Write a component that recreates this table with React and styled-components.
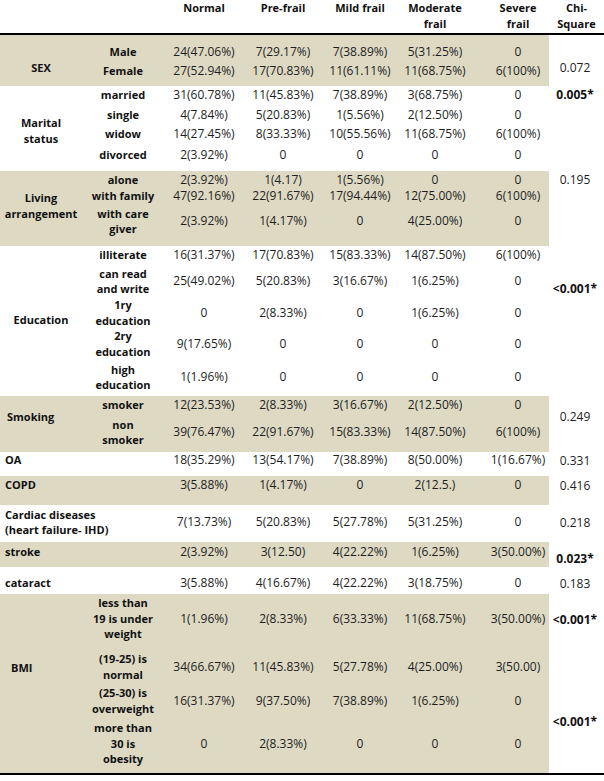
import React from 'react'
import styled, { createGlobalStyle } from 'styled-components'

const GlobalStyle = createGlobalStyle`
  html, body {
    margin: 0;
    padding: 0;
    background: #fff;
  }
  body {
    font-family: "Open Sans", "Liberation Sans", sans-serif;
    color: #1e1e1e;
  }
`

const BEIGE = '#ddd9c3'

const Table = styled.table`
  width: 604px;
  table-layout: fixed;
  border-collapse: separate;
  border-spacing: 0;
  border-bottom: 2px solid #000;
`

// header cells: bold, top aligned, black rule underneath
const HeadCell = styled.th`
  height: 33px;
  padding: 0 0 0 ${p => p.$pl || 0}px;
  vertical-align: top;
  text-align: center;
  font-size: 11px;
  font-weight: 700;
  line-height: 16px;
  color: #111;
  border-bottom: 2px solid #000;
`

const Row = styled.tr`
  height: ${p => p.$h}px;
`

/* the big label on the left, spanning every sub row of its group */
const GroupCell = styled.td`
  padding: ${p => p.$pt || 0}px 0 0 ${p => p.$pl || 0}px;
  vertical-align: top;
  text-align: ${p => p.$align || 'center'};
  font-size: 11px;
  font-weight: 700;
  line-height: 15.5px;
  color: #111;
  background: ${p => (p.$shade ? BEIGE : '#fff')};
`

const LabelCell = styled.td`
  padding: ${p => p.$pt || 0}px 0 ${p => p.$pb || 0}px ${p => p.$pl || 0}px;
  vertical-align: middle;
  text-align: ${p => p.$align || 'center'};
  font-size: 11px;
  font-weight: 700;
  line-height: 15.5px;
  color: #111;
  background: ${p => (p.$shade ? BEIGE : '#fff')};
`

const ValueCell = styled.td`
  padding: ${p => p.$pt || 0}px 0 ${p => p.$pb || 0}px ${p => p.$pl || 0}px;
  vertical-align: middle;
  text-align: center;
  white-space: nowrap;
  font-size: 12px;
  line-height: 15.5px;
  background: ${p => (p.$shade ? BEIGE : '#fff')};
`

const ChiCell = styled.td`
  padding: ${p => p.$pt || 0}px 3px 0 0;
  vertical-align: top;
  text-align: center;
  white-space: nowrap;
  font-size: 12px;
  font-weight: ${p => (p.$bold ? 700 : 400)};
  line-height: 15.5px;
  color: ${p => (p.$bold ? '#111' : 'inherit')};
  background: #fff;
`

const widths = [82, 82, 80, 78, 76, 74, 77, 55]
const SEVERE_PAD = 15

const blocks = [
  {
    label: ['SEX'], lpt: 25, shade: true,
    chi: [{ at: 0, span: 2, text: '0.072', pt: 25 }],
    rows: [
      { sub: ['Male'], h: 26, pt: 8, v: ['24(47.06%)', '7(29.17%)', '7(38.89%)', '5(31.25%)', '0'] },
      { sub: ['Female'], h: 25, pb: 5, v: ['27(52.94%)', '17(70.83%)', '11(61.11%)', '11(68.75%)', '6(100%)'] },
    ],
  },
  {
    label: ['Marital', 'status'], lpt: 29,
    chi: [{ at: 0, span: 4, text: '0.005*', bold: true, pt: 1 }],
    rows: [
      { sub: ['married'], h: 19, pb: 1, v: ['31(60.78%)', '11(45.83%)', '7(38.89%)', '3(68.75%)', '0'] },
      { sub: ['single'], h: 19, pt: 1, v: ['4(7.84%)', '5(20.83%)', '1(5.56%)', '2(12.50%)', '0'] },
      { sub: ['widow'], h: 20, v: ['14(27.45%)', '8(33.33%)', '10(55.56%)', '11(68.75%)', '6(100%)'] },
      { sub: ['divorced'], h: 27, pb: 5, v: ['2(3.92%)', '0', '0', '0', '0'] },
    ],
  },
  {
    label: ['Living', 'arrangement'], lpt: 19, shade: true,
    chi: [{ at: 0, span: 3, text: '0.195', pt: 1 }],
    rows: [
      { sub: ['alone'], h: 17, pt: 1, v: ['2(3.92%)', '1(4.17)', '1(5.56%)', '0', '0'] },
      { sub: ['with family'], h: 16, v: ['47(92.16%)', '22(91.67%)', '17(94.44%)', '12(75.00%)', '6(100%)'] },
      { sub: ['with care', 'giver'], h: 42, pb: 8, v: ['2(3.92%)', '1(4.17%)', '0', '4(25.00%)', '0'] },
    ],
  },
  {
    label: ['Education'], lpt: 66,
    chi: [{ at: 0, span: 5, text: '<0.001*', bold: true, pt: 35 }],
    rows: [
      { sub: ['illiterate'], h: 18, v: ['16(31.37%)', '17(70.83%)', '15(83.33%)', '14(87.50%)', '6(100%)'] },
      { sub: ['can read', 'and write'], h: 33, pt: 1, v: ['25(49.02%)', '5(20.83%)', '3(16.67%)', '1(6.25%)', '0'] },
      { sub: ['1ry', 'education'], h: 31, v: ['0', '2(8.33%)', '0', '1(6.25%)', '0'] },
      { sub: ['2ry', 'education'], h: 32, pb: 1, v: ['9(17.65%)', '0', '0', '0', '0'] },
      { sub: ['high', 'education'], h: 36, pb: 2, v: ['1(1.96%)', '0', '0', '0', '0'] },
    ],
  },
  {
    label: ['Smoking'], lpt: 13, align: 'left', lpl: 7, shade: true,
    chi: [{ at: 0, span: 2, text: '0.249', pt: 13 }],
    rows: [
      { sub: ['smoker'], h: 17, pt: 1, v: ['12(23.53%)', '2(8.33%)', '3(16.67%)', '2(12.50%)', '0'] },
      { sub: ['non', 'smoker'], h: 39, pb: 1, v: ['39(76.47%)', '22(91.67%)', '15(83.33%)', '14(87.50%)', '6(100%)'] },
    ],
  },
  {
    label: ['OA'], chi: [{ at: 0, span: 1, text: '0.331', pt: 1 }],
    rows: [{ h: 24, pb: 8, v: ['18(35.29%)', '13(54.17%)', '7(38.89%)', '8(50.00%)', '1(16.67%)'] }],
  },
  {
    label: ['COPD'], shade: true, chi: [{ at: 0, span: 1, text: '0.416', pt: 2 }],
    rows: [{ h: 29, pb: 11, v: ['3(5.88%)', '1(4.17%)', '0', '2(12.5.)', '0'] }],
  },
  {
    label: ['Cardiac diseases', '(heart failure- IHD)'], chi: [{ at: 0, span: 1, text: '0.218', pt: 10 }],
    rows: [{ h: 37, pb: 3, v: ['7(13.73%)', '5(20.83%)', '5(27.78%)', '5(31.25%)', '0'] }],
  },
  {
    label: ['stroke'], shade: true, chi: [{ at: 0, span: 1, text: '0.023*', bold: true, pt: 9 }],
    rows: [{ h: 24, pb: 6, v: ['2(3.92%)', '3(12.50)', '4(22.22%)', '1(6.25%)', '3(50.00%)'] }],
  },
  {
    label: ['cataract'], chi: [{ at: 0, span: 1, text: '0.183', pt: 9 }],
    rows: [{ h: 27, pt: 5, v: ['3(5.88%)', '4(16.67%)', '4(22.22%)', '3(18.75%)', '0'] }],
  },
  {
    label: ['BMI'], lpt: 66, align: 'left', lpl: 11, shade: true,
    chi: [
      { at: 0, span: 1, text: '<0.001*', bold: true, pt: 18 },
      { at: 1, span: 3, text: '<0.001*', bold: true, pt: 69 },
    ],
    rows: [
      { sub: ['less than', '19 is under', 'weight'], h: 51, pb: 1, v: ['1(1.96%)', '2(8.33%)', '6(33.33%)', '11(68.75%)', '3(50.00%)'] },
      { sub: ['(19-25) is', 'normal'], h: 39, pt: 5, v: ['34(66.67%)', '11(45.83%)', '5(27.78%)', '4(25.00%)', '3(50.00)'] },
      { sub: ['(25-30) is', 'overweight'], h: 36, pb: 2, v: ['16(31.37%)', '9(37.50%)', '7(38.89%)', '1(6.25%)', '0'] },
      { sub: ['more than', '30 is', 'obesity'], h: 53, pb: 5, v: ['0', '2(8.33%)', '0', '0', '0'] },
    ],
  },
]

const Lines = ({ lines }) =>
  lines.map((l, i) => (
    <React.Fragment key={i}>
      {i > 0 && <br />}
      {l}
    </React.Fragment>
  ))

const Block = ({ b }) =>
  b.rows.map((r, i) => {
    const chi = b.chi.find(c => c.at === i)
    const single = !r.sub
    return (
      <Row key={i} $h={r.h}>
        {single ? (
          <LabelCell colSpan={2} $align="left" $pl={5} $pt={r.pt} $pb={r.pb} $shade={b.shade}>
            <Lines lines={b.label} />
          </LabelCell>
        ) : (
          <>
            {i === 0 && (
              <GroupCell rowSpan={b.rows.length} $pt={b.lpt} $pl={b.lpl} $align={b.align} $shade={b.shade}>
                <Lines lines={b.label} />
              </GroupCell>
            )}
            <LabelCell $pt={r.pt} $pb={r.pb} $shade={b.shade}>
              <Lines lines={r.sub} />
            </LabelCell>
          </>
        )}
        {r.v.map((val, j) => (
          <ValueCell key={j} $pt={r.pt} $pb={r.pb} $pl={j === 4 ? SEVERE_PAD : 0} $shade={b.shade}>
            {val}
          </ValueCell>
        ))}
        {chi && (
          <ChiCell rowSpan={chi.span} $pt={chi.pt} $bold={chi.bold}>
            {chi.text}
          </ChiCell>
        )}
      </Row>
    )
  })

export default function App() {
  return (
    <>
      <GlobalStyle />
      <Table>
        <colgroup>
          {widths.map((w, i) => (
            <col key={i} style={{ width: w }} />
          ))}
        </colgroup>
        <thead>
          <tr>
            <HeadCell />
            <HeadCell />
            <HeadCell>Normal</HeadCell>
            <HeadCell>Pre-frail</HeadCell>
            <HeadCell>Mild frail</HeadCell>
            <HeadCell>Moderate<br />frail</HeadCell>
            <HeadCell $pl={SEVERE_PAD}>Severe<br />frail</HeadCell>
            <HeadCell>Chi-<br />Square</HeadCell>
          </tr>
        </thead>
        <tbody>
          {blocks.map((b, i) => (
            <Block key={i} b={b} />
          ))}
        </tbody>
      </Table>
    </>
  )
}
